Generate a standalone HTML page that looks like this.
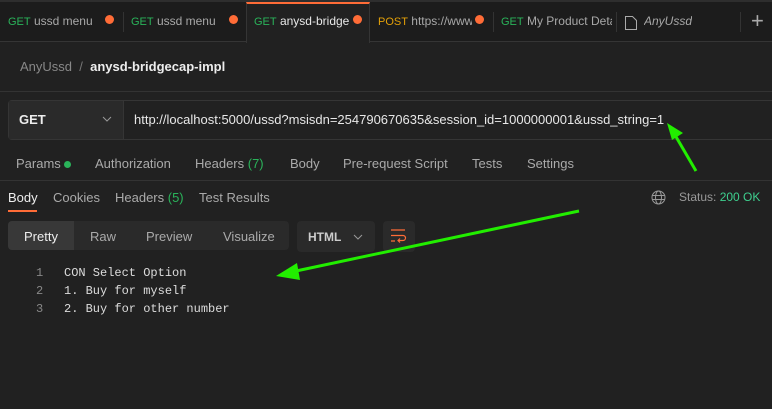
<!DOCTYPE html>
<html><head><style>
*{margin:0;padding:0;box-sizing:border-box}
body{width:772px;height:409px;background:#212121;font-family:"Liberation Sans",sans-serif;font-size:13px;color:#c8c8c8;position:relative;overflow:hidden}
.a{position:absolute;white-space:nowrap}
.tabbar{position:absolute;left:0;top:0;width:772px;height:42px;background:#1c1c1c;border-top:2px solid #2e2e2e;border-bottom:1px solid #353535}
.tab{position:absolute;top:2px;height:39px;line-height:39px;font-size:12px;color:#a8a8a8;overflow:hidden;white-space:nowrap}
.sep{position:absolute;top:12px;width:1px;height:20px;background:#333}
.g{color:#2ab35a;font-size:11px}
.dot{position:absolute;top:15px;width:9px;height:9px;border-radius:50%;background:#ff6c37}
.line{position:absolute;left:0;width:772px;height:1px;background:#333}
</style></head><body>
<div class="tabbar"></div>
<div class="tab" style="left:8px;width:92px"><span class="g">GET</span> ussd menu</div><div class="dot" style="left:105px"></div>
<div class="sep" style="left:123px"></div>
<div class="tab" style="left:131px;width:92px"><span class="g">GET</span> ussd menu</div><div class="dot" style="left:229px"></div>
<div style="position:absolute;left:246px;top:2px;width:124px;height:41px;background:#212121;border-top:2px solid #ff6c37;border-left:1px solid #353535;border-right:1px solid #353535"></div>
<div class="tab" style="left:254px;width:96px;color:#e8e8e8"><span class="g">GET</span> anysd-bridge</div><div class="dot" style="left:353px"></div>
<div class="tab" style="left:378px;width:94px"><span class="g" style="color:#e3a008">POST</span> https://www</div><div class="dot" style="left:475px"></div>
<div class="sep" style="left:493px"></div>
<div class="tab" style="left:501px;width:111px"><span class="g">GET</span> My Product Deta</div>
<div class="sep" style="left:616px"></div>
<svg class="a" style="left:624px;top:15px" width="14" height="16"><path d="M1.5 1.5h7l4 4v9h-11z" fill="none" stroke="#aaa"/></svg>
<div class="tab" style="left:644px;font-style:italic">AnyUssd</div>
<div class="sep" style="left:740px"></div>
<div class="a" style="left:751px;top:8px;font-size:22px;color:#aaa">+</div>
<div class="a" style="left:20px;top:59px;font-size:13px"><span style="color:#888">AnyUssd</span> <span style="color:#777">&nbsp;/&nbsp;</span> <b style="color:#eee">anysd-bridgecap-impl</b></div>
<div class="line" style="top:91px"></div>
<div style="position:absolute;left:8px;top:100px;width:770px;height:40px;border:1px solid #353535;border-radius:4px;background:#212121"></div>
<div style="position:absolute;left:9px;top:101px;width:115px;height:38px;background:#2a2a2a;border-right:1px solid #353535"></div>
<div class="a" style="left:19px;top:112px;font-weight:bold;color:#eee">GET</div>
<svg class="a" style="left:102px;top:116px" width="10" height="7"><path d="M1 1l4 4 4-4" fill="none" stroke="#999"/></svg>
<div class="a" style="left:134px;top:112px;color:#e8e8e8">http://localhost:5000/ussd?msisdn=254790670635&amp;session_id=1000000001&amp;ussd_string=1</div>
<div class="a" style="left:16px;top:156px;color:#aaa">Params <span style="display:inline-block;width:7px;height:7px;border-radius:50%;background:#2ab35a"></span></div>
<div class="a" style="left:95px;top:156px;color:#aaa">Authorization</div>
<div class="a" style="left:195px;top:156px;color:#aaa">Headers <span style="color:#2ab35a">(7)</span></div>
<div class="a" style="left:290px;top:156px;color:#aaa">Body</div>
<div class="a" style="left:343px;top:156px;color:#aaa">Pre-request Script</div>
<div class="a" style="left:472px;top:156px;color:#aaa">Tests</div>
<div class="a" style="left:527px;top:156px;color:#aaa">Settings</div>
<div class="line" style="top:180px"></div>
<div class="a" style="left:8px;top:190px;color:#eee">Body</div>
<div style="position:absolute;left:8px;top:210px;width:29px;height:2px;background:#ff6c37"></div>
<div class="a" style="left:53px;top:190px;color:#aaa">Cookies</div>
<div class="a" style="left:115px;top:190px;color:#aaa">Headers <span style="color:#2ab35a">(5)</span></div>
<div class="a" style="left:199px;top:190px;color:#aaa">Test Results</div>
<svg class="a" style="left:651px;top:190px" width="15" height="15"><g fill="none" stroke="#999"><circle cx="7.5" cy="7.5" r="6.5"/><ellipse cx="7.5" cy="7.5" rx="3" ry="6.5"/><path d="M1 5.5h13M1 9.5h13"/></g></svg>
<div class="a" style="left:679px;top:190px;color:#999;font-size:12px">Status: <span style="color:#3ecf8e">200 OK</span></div>
<div style="position:absolute;left:8px;top:221px;width:281px;height:29px;background:#2a2a2a;border-radius:4px"></div>
<div style="position:absolute;left:8px;top:221px;width:66px;height:29px;background:#383838;border-radius:4px 0 0 4px"></div>
<div class="a" style="left:24px;top:229px;color:#eee">Pretty</div>
<div class="a" style="left:90px;top:229px;color:#aaa">Raw</div>
<div class="a" style="left:146px;top:229px;color:#aaa">Preview</div>
<div class="a" style="left:223px;top:229px;color:#aaa">Visualize</div>
<div style="position:absolute;left:297px;top:221px;width:78px;height:31px;background:#2a2a2a;border-radius:4px"></div>
<div class="a" style="left:308px;top:230px;color:#ccc;font-size:12px;font-weight:bold">HTML</div>
<svg class="a" style="left:353px;top:234px" width="10" height="6"><path d="M1 1l4 4 4-4" fill="none" stroke="#999"/></svg>
<div style="position:absolute;left:383px;top:221px;width:32px;height:31px;background:#2a2a2a;border-radius:4px"></div>
<svg class="a" style="left:390px;top:228px" width="18" height="17"><g fill="none" stroke="#ff6c37" stroke-width="1.2"><path d="M1 2h14M1 7.5h12a2.5 2.5 0 010 5H8M10 10.5l-2 2 2 2M1 13h4"/></g></svg>
<div class="a" style="left:36px;top:264px;font-family:'Liberation Mono',monospace;font-size:12px;line-height:18px;color:#888">1<br>2<br>3</div>
<div class="a" style="left:64px;top:264px;font-family:'Liberation Mono',monospace;font-size:12px;line-height:18px;color:#ddd">CON Select Option<br>1. Buy for myself<br>2. Buy for other number</div>
<svg class="a" style="left:0;top:0" width="772" height="409">
<line x1="579" y1="211" x2="296" y2="271" stroke="#22ee00" stroke-width="3"/>
<polygon points="276,276 297,263 300,280" fill="#22ee00"/>
<line x1="696" y1="171" x2="675" y2="135" stroke="#22ee00" stroke-width="3"/>
<polygon points="667,123 683,133 672,140" fill="#22ee00"/>
</svg>
</body></html>
